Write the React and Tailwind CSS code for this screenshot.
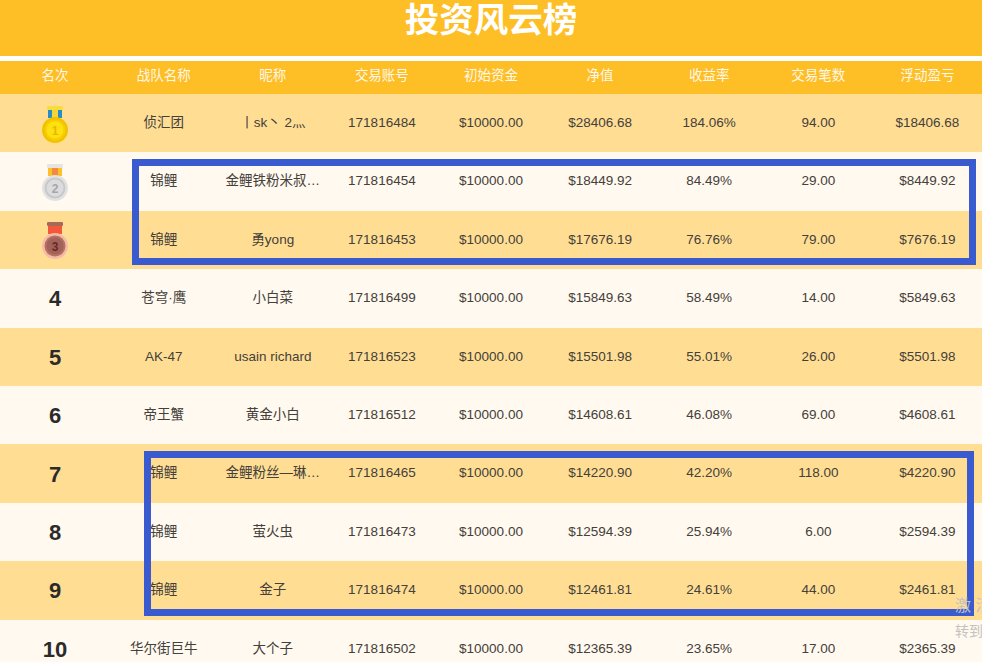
import React from 'react';

const headers = ['名次', '战队名称', '昵称', '交易账号', '初始资金', '净值', '收益率', '交易笔数', '浮动盈亏'];

const rows = [
  ['1', '侦汇团', '丨sk丶 2灬', '171816484', '$10000.00', '$28406.68', '184.06%', '94.00', '$18406.68'],
  ['2', '锦鲤', '金鲤铁粉米叔…', '171816454', '$10000.00', '$18449.92', '84.49%', '29.00', '$8449.92'],
  ['3', '锦鲤', '勇yong', '171816453', '$10000.00', '$17676.19', '76.76%', '79.00', '$7676.19'],
  ['4', '苍穹·鹰', '小白菜', '171816499', '$10000.00', '$15849.63', '58.49%', '14.00', '$5849.63'],
  ['5', 'AK-47', 'usain richard', '171816523', '$10000.00', '$15501.98', '55.01%', '26.00', '$5501.98'],
  ['6', '帝王蟹', '黄金小白', '171816512', '$10000.00', '$14608.61', '46.08%', '69.00', '$4608.61'],
  ['7', '锦鲤', '金鲤粉丝—琳…', '171816465', '$10000.00', '$14220.90', '42.20%', '118.00', '$4220.90'],
  ['8', '锦鲤', '萤火虫', '171816473', '$10000.00', '$12594.39', '25.94%', '6.00', '$2594.39'],
  ['9', '锦鲤', '金子', '171816474', '$10000.00', '$12461.81', '24.61%', '44.00', '$2461.81'],
  ['10', '华尔街巨牛', '大个子', '171816502', '$10000.00', '$12365.39', '23.65%', '17.00', '$2365.39'],
];

const medals = {
  1: { band: '#f7dc3c', left: '#2a8cc4', mid: '#f5d63a', glow: '#f2c200', ring: '#f7cf00', inner: '#ffe010', num: '#e9b800' },
  2: { band: '#e6e4e0', left: '#fbc02d', mid: '#f58a3c', glow: '#e2e2e2', ring: '#c8c8ca', inner: '#dcdcde', num: '#a6a6a8' },
  3: { band: '#a8695a', left: '#f4583a', mid: '#f4583a', glow: '#f3bba8', ring: '#b86f62', inner: '#a0625a', num: '#6e2622' },
};

const Medal = ({ n }) => {
  const m = medals[n];
  return (
    <svg width="30" height="38" viewBox="0 0 30 38">
      <rect x="7" y="1" width="16" height="4" rx="1" fill={m.band} />
      <rect x="8" y="5" width="14" height="8" fill={m.mid} />
      <rect x="8" y="5" width="4" height="8" fill={m.left} />
      <rect x="18" y="5" width="4" height="8" fill={m.left} />
      <circle cx="15" cy="25" r="13" fill={m.glow} />
      <circle cx="15" cy="25" r="10.5" fill={m.ring} />
      <circle cx="15" cy="25" r="8.5" fill={m.inner} />
      <text x="15" y="29.5" textAnchor="middle" fontSize="12" fontWeight="700" fontFamily="Liberation Sans" fill={m.num}>
        {n}
      </text>
    </svg>
  );
};

const App = () => {
  return (
    <div
      className="relative h-[662px] overflow-hidden bg-white text-[13.5px] text-[#44403a]"
      style={{ fontFamily: '"Liberation Sans", "Noto Sans CJK SC", sans-serif' }}
    >
      <div className="h-[56px] bg-[#febe26] text-center text-[34.5px] font-bold leading-[40px] text-white">投资风云榜</div>

      {/* Table */}
      <div className="mt-[5px] grid h-[33px] grid-cols-9 items-center bg-[#febe26] text-center text-[#fff8e6]">
        {headers.map((h, i) => (
          <div key={h} className={`pb-[2px] ${i === 0 ? 'pl-[1px]' : ''}`}>{h}</div>
        ))}
      </div>
      {rows.map((row, idx) => (
        <div
          key={row[0]}
          className={`grid h-[58.4px] grid-cols-9 items-center text-center ${idx % 2 === 0 ? 'bg-[#ffde94]' : 'bg-[#fff9ef]'}`}
        >
          <div className="flex justify-center pl-[1px] pt-[1px] text-[22px] font-bold text-[#2b2b2b]">
            {idx < 3 ? <Medal n={idx + 1} /> : row[0]}
          </div>
          {row.slice(1).map((cell, i) => (
            <div key={i}>{cell}</div>
          ))}
        </div>
      ))}

      {/* Hand-drawn highlight boxes over the table */}
      <div className="absolute left-[132px] top-[159px] h-[106px] w-[844px] border-[7px] border-[#3a5bd0]" />
      <div className="absolute left-[144px] top-[451px] h-[165px] w-[830px] border-[7px] border-[#3a5bd0]" />

      {/* Activation watermark */}
      <div className="absolute left-[955px] top-[595px] whitespace-nowrap text-[#c4c2be]">
        <div className="text-[16px] leading-[22px]">激 活</div>
        <div className="mt-[5px] text-[14px] leading-[18px]">转到</div>
      </div>
    </div>
  );
};

export default App;
